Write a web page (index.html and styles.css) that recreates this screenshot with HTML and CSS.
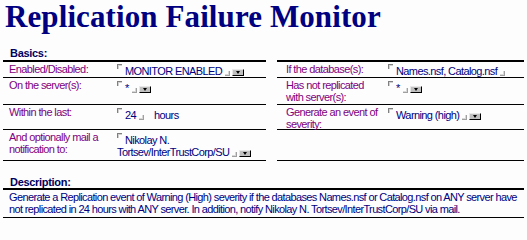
FILE: index.html
```html
<!DOCTYPE html>
<html>
<head>
<meta charset="utf-8">
<link rel="stylesheet" href="styles.css">
</head>
<body>
<div class="page">
  <h1 class="title">Replication Failure Monitor</h1>
  <div class="sect basics-h">Basics:</div>
  <div class="grid">
    <div class="lbl lft first">Enabled/Disabled:</div>
    <div class="val first"><span class="fo"></span>MONITOR ENABLED<span class="fc"></span><span class="dd"></span></div>
    <div class="gap"></div>
    <div class="lbl rgt first">If the database(s):</div>
    <div class="val first"><span class="fo"></span>Names.nsf, Catalog.nsf<span class="fc"></span></div>

    <div class="lbl lft">On the server(s):</div>
    <div class="val"><span class="fo"></span>*<span class="fc"></span><span class="dd"></span></div>
    <div class="gap"></div>
    <div class="lbl rgt">Has not replicated<br>with server(s):</div>
    <div class="val"><span class="fo"></span>*<span class="fc"></span><span class="dd"></span></div>

    <div class="lbl lft">Within the last:</div>
    <div class="val"><span class="fo"></span>24<span class="fc"></span><span class="unit">hours</span></div>
    <div class="gap"></div>
    <div class="lbl rgt">Generate an event of<br>severity:</div>
    <div class="val"><span class="fo"></span>Warning (high)<span class="fc"></span><span class="dd"></span></div>

    <div class="lbl lft">And optionally mail a<br>notification to:</div>
    <div class="val"><span class="fo"></span>Nikolay N. Tortsev/InterTrustCorp/SU<span class="fc"></span><span class="dd"></span></div>
    <div class="gap"></div>
    <div class="lbl rgt"></div>
    <div class="val"></div>
  </div>
  <div class="sect desc-h">Description:</div>
  <div class="desc">Generate a Replication event of Warning (High) severity if the databases Names.nsf or Catalog.nsf on ANY server have<br>not replicated in 24 hours with ANY server. In addition, notify Nikolay N. Tortsev/InterTrustCorp/SU via mail.</div>
</div>
</body>
</html>
```

FILE: styles.css
```css
html, body {
  margin: 0;
  padding: 0;
  background: #fcfdfc;
}
.page {
  padding: 0 3px;
  font-family: "Liberation Sans", Arial, sans-serif;
  font-size: 11px;
  line-height: 12px;
  letter-spacing: -0.6px;
}
.title {
  margin: 0;
  padding-left: 2px;
  font-family: "Liberation Serif", "Times New Roman", serif;
  font-weight: bold;
  font-size: 31px;
  line-height: 34px;
  letter-spacing: 0.1px;
  color: #000080;
}
.sect {
  margin: 0 0 1px;
  padding-left: 7px;
  font-weight: bold;
  color: #000060;
  letter-spacing: -0.3px;
}
.basics-h {
  margin-top: 13px;
}
.desc-h {
  margin: 15px 0 0;
}
.grid {
  display: grid;
  grid-template-columns: 114px 149px 11px 111px 136px;
  grid-template-rows: 18px 27px 25px 31px;
}
.grid > div {
  box-sizing: border-box;
  border-bottom: 1px solid #000;
}
.grid > .gap {
  border: none;
}
.grid > .first {
  border-top: 2px solid #000;
}
.lbl {
  color: #800080;
  padding-top: 1px;
}
.lbl.lft { padding-left: 6px; }
.lbl.rgt { padding-left: 9px; }
.val {
  color: #000080;
  padding-top: 3px;
}
.val.first { padding-top: 2px; }
.fo {
  display: inline-block;
  width: 4px;
  height: 4px;
  border-top: 1px solid #808080;
  border-left: 1px solid #808080;
  box-shadow: inset 1px 1px #d0d0d0;
  vertical-align: 6px;
  margin-right: 3px;
}
.fc {
  display: inline-block;
  width: 4px;
  height: 4px;
  border-right: 1px solid #a0a0a0;
  border-bottom: 1px solid #a0a0a0;
  box-shadow: inset -1px -1px #d8d8d8;
  vertical-align: -1px;
  margin: 0 2px 0 3px;
}
.dd {
  display: inline-block;
  position: relative;
  box-sizing: border-box;
  width: 12px;
  height: 7px;
  background: #c0c0c0;
  border-top: 1px solid #e8e8e8;
  border-left: 1px solid #e8e8e8;
  border-right: 1px solid #000;
  border-bottom: 1px solid #000;
  vertical-align: -1px;
}
.dd::after {
  content: "";
  position: absolute;
  left: 3px;
  top: 1px;
  border-left: 2px solid transparent;
  border-right: 2px solid transparent;
  border-top: 3px solid #000;
}
.unit {
  margin-left: 8px;
}
.desc {
  border-top: 2px solid #000;
  border-bottom: 1px solid #000;
  padding: 1px 6px 2px;
  color: #000080;
  letter-spacing: -0.63px;
  white-space: nowrap;
}
```
